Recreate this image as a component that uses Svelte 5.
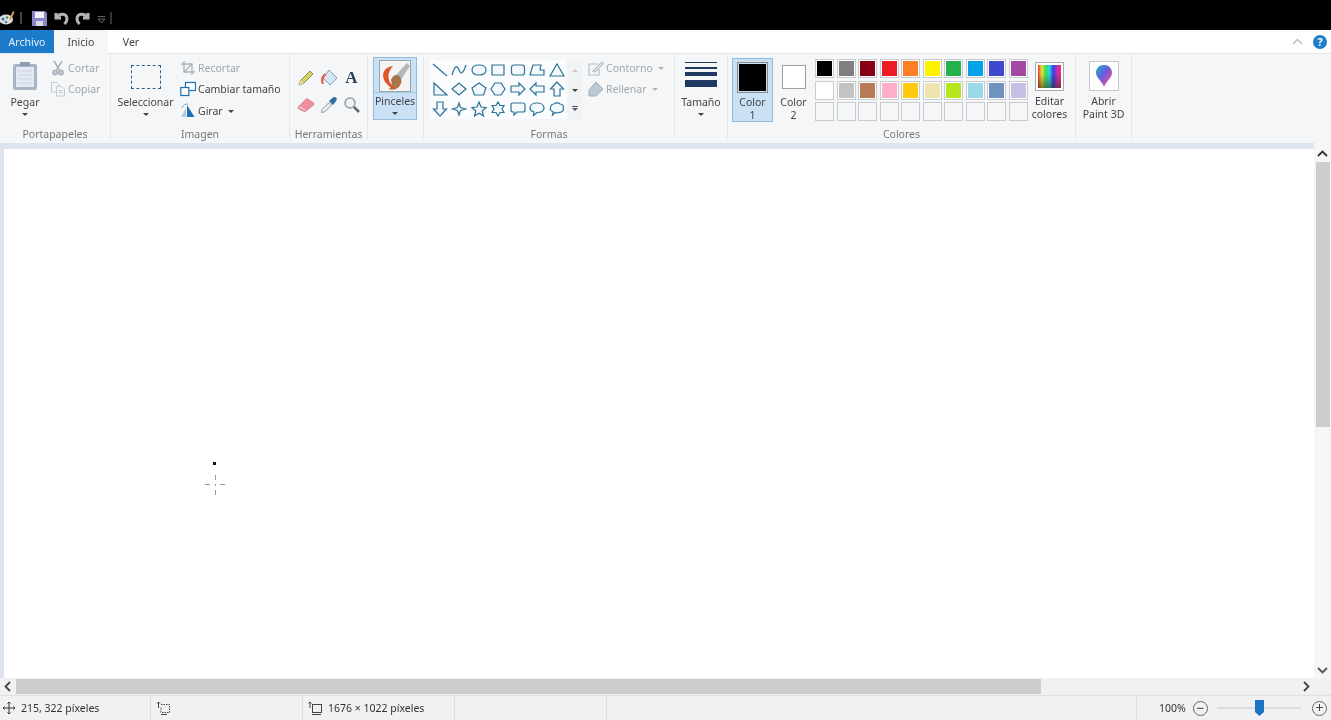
<script>
	const row1 = ['#000000', '#7f7f7f', '#880015', '#ed1c24', '#ff7f27', '#fff200', '#22b14c', '#00a2e8', '#3f48cc', '#a349a4'];
	const row2 = ['#ffffff', '#c3c3c3', '#b97a57', '#ffaec9', '#ffc90e', '#efe4b0', '#b5e61d', '#99d9ea', '#7092be', '#c8bfe7'];
	const row3 = Array(10).fill('#f5f6f7');
	const swatches = [...row1, ...row2, ...row3];

	// outlines for the shape gallery, on a 16x16 box
	const shapes = [
		'M1 2 L15 14',
		'M1 13 C4 3 6 3 8 8 C10 13 12 12 15 3',
		'M8 3 C12.5 3 15 5 15 8 C15 11 12.5 13 8 13 C3.5 13 1 11 1 8 C1 5 3.5 3 8 3Z',
		'M2 3 H14 V13 H2Z',
		'M4 3 H12 Q14.500 3 14.500 5.500 V10.500 Q14.500 13 12 13 H4 Q1.500 13 1.500 10.500 V5.500 Q1.500 3 4 3Z',
		'M4 3 H12 L11 8 H15 V13 H1Z',
		'M8 2 L15 14 H1Z',
		'M2 2 L15 14 H2Z',
		'M8 2 L15 8 L8 14 L1 8Z',
		'M8 2 L15 7 L12.500 14 H3.500 L1 7Z',
		'M5 2 H11 L15 8 L11 14 H5 L1 8Z',
		'M1 5 H9 V2 L15 8 L9 14 V11 H1Z',
		'M15 5 H7 V2 L1 8 L7 14 V11 H15Z',
		'M8 1 L14.500 8 H11 V15 H5 V8 H1.500Z',
		'M5 1 H11 V8 H14.500 L8 15 L1.500 8 H5Z',
		'M8 2 L9.500 6.500 L15 8 L9.500 9.500 L8 14 L6.500 9.500 L1 8 L6.500 6.500Z',
		'M8 1 L10 6 L15 6.500 L11.200 10 L12.500 15 L8 12.300 L3.500 15 L4.800 10 L1 6.500 L6 6Z',
		'M8 1 L10 4.500 L14 4.500 L12 8 L14 11.500 L10 11.500 L8 15 L6 11.500 L2 11.500 L4 8 L2 4.500 L6 4.500Z',
		'M3 2 H13 Q15 2 15 4 V9 Q15 11 13 11 H7 L4 14 V11 H3 Q1 11 1 9 V4 Q1 2 3 2Z',
		'M8 2 C12 2 15 4 15 7 C15 10 12 11.500 8 11.500 L4.500 14.500 L5 11 C2.500 10.300 1 8.800 1 7 C1 4 4 2 8 2Z',
		'M5 3 C6 1.500 10 1.500 11 3 C13.500 3 15 5 14.300 7 C15 9.500 13 11.500 10.500 11.300 C9 12 7 12 6 11.500 L3.500 14 L4 10.800 C1.500 10 .5 8 1.700 6 C1.500 4.300 3 3 5 3Z'
	];
</script>

<div class="app">
	<header class="titlebar">
		<svg class="logo" width="16" height="16" viewBox="0 0 16 16">
			<ellipse cx="7" cy="9.500" rx="7" ry="5" fill="#d8dee4" />
			<circle cx="4" cy="9" r="1.500" fill="#2f6f9f" />
			<circle cx="8" cy="7.500" r="1.300" fill="#3c9a50" />
			<circle cx="7" cy="12" r="1.300" fill="#7a7a7a" />
			<path d="M10 9 L14 1 L15.500 2 L12 10Z" fill="#d8a050" />
		</svg>
		<span class="title-sep"></span>
		<svg class="save" width="15" height="15" viewBox="0 0 15 15">
			<path d="M0 0 H13 L15 2 V15 H0Z" fill="#8a86c8" />
			<rect x="3" y="1" width="9" height="6" fill="#f1f1f8" />
			<rect x="4" y="10" width="7" height="5" fill="#d8d8e8" />
		</svg>
		<svg width="15" height="14" viewBox="0 0 15 14" fill="none" stroke="#b5b5b5" stroke-width="3">
			<path d="M2 2 V7 H7" />
			<path d="M2.500 6.500 C6 1.500 13 2.500 13 8 C13 10 12 11.500 10.500 13" />
		</svg>
		<svg class="redo" width="15" height="14" viewBox="0 0 15 14" fill="none" stroke="#b5b5b5" stroke-width="3">
			<path d="M13 2 V7 H8" />
			<path d="M12.500 6.500 C9 1.500 2 2.500 2 8 C2 10 3 11.500 4.500 13" />
		</svg>
		<svg class="qat" width="9" height="9" viewBox="0 0 9 9" fill="none" stroke="#666" stroke-width="1">
			<path d="M1 1.500 H8 M1 4 L4.500 8 L8 4Z" />
		</svg>
		<span class="title-sep faint"></span>
	</header>

	<nav class="tabs">
		<button class="tab file">Archivo</button>
		<button class="tab active">Inicio</button>
		<button class="tab ver">Ver</button>
		<div class="tab-right">
			<svg width="11" height="7" viewBox="0 0 11 7" fill="none" stroke="#b8b8b8" stroke-width="1.300"><path d="M1 6 L5.500 1.500 L10 6" /></svg>
			<span class="help">?</span>
		</div>
	</nav>

	<section class="ribbon">
		<div class="group clip">
			<div class="group-body">
				<div class="large pegar">
					<svg width="26" height="30" viewBox="0 0 26 30">
						<rect x="1" y="3" width="24" height="26" rx="2" fill="#a9b5c6" />
						<rect x="4" y="6" width="18" height="20" fill="#e3e9f3" />
						<path d="M6 10 H20 M6 14 H20 M6 18 H20 M6 22 H20" stroke="#cbd5e4" />
						<rect x="8" y="1" width="10" height="4" fill="#8f9db2" />
					</svg>
					<span class="large-label">Pegar</span>
					<span class="caret"></span>
				</div>
				<div class="small-col">
					<div class="small disabled">
						<svg width="16" height="16" viewBox="0 0 16 16" fill="none" stroke="#a9b3bf" stroke-width="1.500">
							<path d="M4 1 L9.500 10 M12 1 L6.500 10" />
							<circle cx="5" cy="12.500" r="2.200" fill="#c6ccd4" />
							<circle cx="11" cy="12.500" r="2.200" fill="#c6ccd4" />
						</svg>
						<span>Cortar</span>
					</div>
					<div class="small disabled">
						<svg width="16" height="16" viewBox="0 0 16 16" fill="#f2f4f6" stroke="#c4cad2">
							<path d="M1.500 1.500 H7 L9 3.500 V11 H1.500Z" />
							<path d="M6.500 5.500 H12 L14.500 8 V15 H6.500Z" />
							<path d="M8.500 9.500 H12.500 M8.500 11.500 H12.500" />
						</svg>
						<span>Copiar</span>
					</div>
				</div>
			</div>
			<span class="group-label">Portapapeles</span>
		</div>

		<div class="group imagen">
			<div class="group-body">
				<div class="large seleccionar">
					<span class="marquee"></span>
					<span class="large-label">Seleccionar</span>
					<span class="caret"></span>
				</div>
				<div class="small-col">
					<div class="small disabled">
						<svg width="16" height="16" viewBox="0 0 16 16" fill="none" stroke="#aab3bd" stroke-width="1.300">
							<path d="M4 1 V12 H15 M1 4 H12 V15" />
							<path d="M4 12 L12 4" />
						</svg>
						<span>Recortar</span>
					</div>
					<div class="small">
						<svg width="16" height="16" viewBox="0 0 16 16" fill="#fff" stroke="#1c6fb5" stroke-width="1.200">
							<rect x="5.500" y="1.500" width="10" height="8" />
							<rect x=".8" y="6.500" width="8" height="8" />
						</svg>
						<span>Cambiar tamaño</span>
					</div>
					<div class="small">
						<svg width="16" height="16" viewBox="0 0 16 16">
							<path d="M7 2 L14.500 14 H7Z" fill="#1c6fb5" />
							<path d="M6 5 L1 14 H6Z" fill="#b8c8d8" />
							<path d="M2 5 C3 2 5 1 8 1" fill="none" stroke="#7fa8c8" />
						</svg>
						<span>Girar</span>
						<span class="caret inline"></span>
					</div>
				</div>
			</div>
			<span class="group-label">Imagen</span>
		</div>

		<div class="group tools">
			<div class="tool-grid">
				<svg width="18" height="18" viewBox="0 0 18 18">
					<path d="M2 16 L3.500 11.500 L13 2 L16 5 L6.500 14.500Z" fill="#d6d25f" stroke="#8d8f4e" />
					<path d="M2 16 L3.500 11.500 L6.500 14.500Z" fill="#f0d8b0" />
				</svg>
				<svg width="18" height="18" viewBox="0 0 18 18">
					<path d="M9 1 L17 9 L10 16 L3 9Z" fill="#d6e6f2" stroke="#7f9fb8" />
					<path d="M5 4 C1 7 0 11 2 15 L4 15 C3 11 3 9 6 6Z" fill="#e2604a" />
				</svg>
				<span class="text-tool">A</span>
				<svg width="18" height="18" viewBox="0 0 18 18">
					<path d="M1 11 L9 3 Q10 2.500 11 3 L16.500 7 Q17.500 8 16.500 9 L9 15 Q8 16 7 15.500 L2 13 Q.5 12 1 11Z" fill="#ee8f9b" stroke="#c66a78" stroke-width=".6" />
					<path d="M1.500 11.500 L8 15 L9 15 L7 12.500 L3 10Z" fill="#f6c0c8" />
				</svg>
				<svg width="18" height="18" viewBox="0 0 18 18">
					<path d="M1.500 16.500 L2 13.500 L9 6.500 L11.500 9 L4.500 16Z" fill="#e6edf3" stroke="#8a9aa8" />
					<path d="M9 5 L13 1.500 Q15 .5 16.500 2 Q17.500 3.500 16 5 L13 9Z" fill="#2c6f9f" />
				</svg>
				<svg width="18" height="18" viewBox="0 0 18 18" fill="none">
					<circle cx="7" cy="7" r="5" fill="#eef3f7" stroke="#93a0ab" stroke-width="1.500" />
					<path d="M11 11 L16 16" stroke="#5d6a74" stroke-width="2.500" />
				</svg>
			</div>
			<span class="group-label">Herramientas</span>
		</div>

		<div class="group brushes">
			<div class="brush-btn">
				<div class="brush-top">
					<svg width="32" height="32" viewBox="0 0 32 32">
						<rect x=".5" y=".5" width="31" height="31" fill="#f4f4f4" stroke="#9aa4ac" />
						<path d="M16 16 L28 3 L31 6 L21 21Z" fill="#b5b8ba" />
						<path d="M12 20 Q15 13 20 16 Q25 20 20 27 Q15 31 10 29 Q14 26 12 20Z" fill="#a9744a" />
						<path d="M14 6 C5 7 1 15 7 23 C10 27 14 29 18 29.500 C11 25 5 16 14 6Z" fill="#e0552a" />
					</svg>
				</div>
				<span class="large-label">Pinceles</span>
				<span class="caret"></span>
			</div>
		</div>

		<div class="group formas">
			<div class="group-body">
				<div class="gallery">
					{#each shapes as d}
						<svg width="16" height="16" viewBox="0 0 16 16" fill="#f2f8fc" stroke="#2f7396" stroke-width="1.200"><path {d} /></svg>
					{/each}
				</div>
				<div class="gallery-scroll">
					<span class="up"></span>
					<span class="caret"></span>
					<span class="more"></span>
				</div>
				<div class="small-col formas-col">
					<div class="small disabled">
						<svg width="16" height="16" viewBox="0 0 16 16" fill="none" stroke="#b4bcc6" stroke-width="1.200">
							<path d="M1 4 H10 M1 4 V15 H11 V9" />
							<path d="M5 11 L14 2 L15.500 3.500 L7 12Z" />
						</svg>
						<span>Contorno</span>
						<span class="caret inline pale"></span>
					</div>
					<div class="small disabled">
						<svg width="16" height="16" viewBox="0 0 16 16" fill="#bcc8d6" stroke="#a3aebb">
							<path d="M8 1 L15 8 L8 15 H1 V9Z" />
						</svg>
						<span>Rellenar</span>
						<span class="caret inline pale"></span>
					</div>
				</div>
			</div>
			<span class="group-label">Formas</span>
		</div>

		<div class="group tamano">
			<div class="large">
				<div class="lines">
					<i style="height: 1px"></i>
					<i style="height: 2px"></i>
					<i style="height: 4px"></i>
					<i style="height: 7px"></i>
				</div>
				<span class="large-label">Tamaño</span>
				<span class="caret"></span>
			</div>
		</div>

		<div class="group colores">
			<div class="group-body">
				<div class="color-btn selected">
					<span class="chip big"><i style="background: #000"></i></span>
					<span class="color-label">Color<br />1</span>
				</div>
				<div class="color-btn">
					<span class="chip"><i style="background: #fff"></i></span>
					<span class="color-label">Color<br />2</span>
				</div>
				<div class="palette">
					{#each swatches as c}
						<span class="swatch"><i style="background: {c}"></i></span>
					{/each}
				</div>
				<div class="editar">
					<span class="rainbow"><i></i></span>
					<span class="color-label">Editar<br />colores</span>
				</div>
			</div>
			<span class="group-label">Colores</span>
		</div>

		<div class="group paint3d">
			<div class="p3d-icon">
				<svg width="18" height="24" viewBox="0 0 18 24">
					<defs>
						<linearGradient id="drop" x1="0" y1="0" x2="1" y2="1">
							<stop offset="0" stop-color="#18b0c8" />
							<stop offset=".45" stop-color="#6a5ce0" />
							<stop offset=".8" stop-color="#d850a0" />
							<stop offset="1" stop-color="#f08030" />
						</linearGradient>
					</defs>
					<path d="M9 1 C14 1 17 4.500 17 9 C17 14 12 16 9 23 C8 18 1 14 1 9 C1 4.500 4 1 9 1Z" fill="url(#drop)" />
				</svg>
			</div>
			<span class="color-label">Abrir<br />Paint 3D</span>
		</div>
	</section>

	<main class="main">
		<div class="workspace">
			<div class="canvas">
				<span class="dot"></span>
				<span class="cross"></span>
			</div>
		</div>
		<div class="vscroll">
			<svg width="11" height="7" viewBox="0 0 11 7" fill="none" stroke="#333" stroke-width="1.800"><path d="M1 6 L5.500 1.500 L10 6" /></svg>
			<div class="vtrack"><span class="vthumb"></span></div>
			<svg width="11" height="7" viewBox="0 0 11 7" fill="none" stroke="#555" stroke-width="1.800"><path d="M1 1 L5.500 5.500 L10 1" /></svg>
		</div>
	</main>

	<div class="hscroll">
		<svg width="7" height="11" viewBox="0 0 7 11" fill="none" stroke="#444" stroke-width="1.800"><path d="M6 1 L1.500 5.500 L6 10" /></svg>
		<div class="htrack"><span class="hthumb"></span></div>
		<svg width="7" height="11" viewBox="0 0 7 11" fill="none" stroke="#444" stroke-width="1.800"><path d="M1 1 L5.500 5.500 L1 10" /></svg>
		<span class="corner"></span>
	</div>

	<footer class="status">
		<div class="cell pos">
			<svg width="12" height="12" viewBox="0 0 12 12" fill="none" stroke="#333"><path d="M6 0 V12 M0 6 H12 M4.500 1.500 L6 0 L7.500 1.500 M4.500 10.500 L6 12 L7.500 10.500 M1.500 4.500 L0 6 L1.500 7.500 M10.500 4.500 L12 6 L10.500 7.500" /></svg>
			<span>215, 322 píxeles</span>
		</div>
		<div class="cell sel">
			<svg width="14" height="13" viewBox="0 0 14 13" fill="none" stroke="#444"><path d="M2.500 0 V6 M1 1.500 L2.500 0 L4 1.500" /><path d="M5 2.500 H13.500 V10.500 H5 V5" stroke-dasharray="1.500 1" /><path d="M5 12.500 H11" /></svg>
		</div>
		<div class="cell dim">
			<svg width="14" height="13" viewBox="0 0 14 13" fill="none" stroke="#444"><path d="M2 0 V6 M.5 1.500 L2 0 L3.500 1.500" /><rect x="4.500" y="2.500" width="9" height="8" /><path d="M4 12.500 H13" /></svg>
			<span>1676 × 1022 píxeles</span>
		</div>
		<div class="cell blank"></div>
		<div class="cell grow"></div>
		<div class="cell zoom">
			<span class="pct">100%</span>
			<span class="round">−</span>
			<div class="slider"><span class="knob"></span></div>
			<span class="round">+</span>
		</div>
	</footer>
</div>

<style>
	:global(body) {
		margin: 0;
		overflow: hidden;
	}

	.app {
		width: 1331px;
		height: 720px;
		display: flex;
		flex-direction: column;
		font-family: 'Noto Sans', 'Open Sans', sans-serif;
		font-size: 10.500px;
		color: #444;
		background: #fff;
		/* the reference is a soft video frame */
		filter: blur(0.35px);
	}

	.titlebar {
		height: 30px;
		flex: none;
		background: #000;
		display: flex;
		align-items: center;
		gap: 7px;
		padding-top: 6px;
		box-sizing: border-box;
	}

	.logo {
		margin-left: -1px;
		margin-right: -2px;
	}

	.title-sep {
		width: 2px;
		height: 12px;
		background: #444;
		margin-right: 3px;
	}

	.title-sep.faint {
		background: #333;
		margin-left: -3px;
	}

	.redo {
		margin-left: -1px;
	}

	.qat {
		margin-top: 3px;
	}

	.tabs {
		height: 23px;
		flex: none;
		display: flex;
		background: #fff;
		border-bottom: 1px solid #e4e6e9;
		box-sizing: content-box;
		margin-bottom: -1px;
		position: relative;
	}

	.tab {
		font: inherit;
		color: #444;
		border: none;
		background: none;
		padding: 0;
		width: 54px;
		height: 24px;
	}

	.tab.ver {
		width: 46px;
	}

	.tab.file {
		background: #1b7ac9;
		color: #e6f0fa;
		height: 23px;
	}

	.tab.active {
		background: #f5f6f7;
		height: 24px;
	}

	.tab-right {
		margin-left: auto;
		display: flex;
		align-items: center;
		gap: 10px;
		padding-right: 4px;
		height: 23px;
	}

	.help {
		width: 14px;
		height: 14px;
		border-radius: 50%;
		background: #1f7fc9;
		color: #fff;
		font-weight: 700;
		font-size: 11px;
		line-height: 14px;
		text-align: center;
	}

	.ribbon {
		height: 90px;
		flex: none;
		display: flex;
		background: #f5f6f7;
		box-sizing: border-box;
		padding-top: 1px;
	}

	.group {
		display: flex;
		flex-direction: column;
		border-right: 1px solid #e6e8ea;
		box-sizing: border-box;
		height: 85px;
		position: relative;
		flex: none;
	}

	.group-body {
		display: flex;
		flex: 1;
		min-height: 0;
	}

	.group-label {
		position: absolute;
		left: 0;
		right: 0;
		top: 73px;
		text-align: center;
		font-size: 10.500px;
		color: #777;
	}

	.clip { width: 111px; }
	.imagen { width: 179px; }
	.tools { width: 78px; }
	.brushes { width: 56px; }
	.formas { width: 251px; }
	.tamano { width: 53px; }
	.colores { width: 348px; }
	.paint3d { width: 56px; align-items: center; }

	.large {
		display: flex;
		flex-direction: column;
		align-items: center;
		padding-top: 7px;
		flex: none;
	}

	.large-label {
		line-height: 14px;
		white-space: nowrap;
	}

	.caret {
		width: 0;
		height: 0;
		border-left: 3px solid transparent;
		border-right: 3px solid transparent;
		border-top: 3px solid #444;
		margin-top: 4px;
	}

	.caret.inline {
		margin: 1px 0 0 3px;
	}

	.caret.pale {
		border-top-color: #b5b5b5;
	}

	.pegar {
		width: 50px;
	}

	.pegar svg {
		margin-bottom: 4px;
	}

	.small-col {
		display: flex;
		flex-direction: column;
		padding-top: 3px;
	}

	.small {
		height: 21.500px;
		display: flex;
		align-items: center;
		gap: 2px;
		white-space: nowrap;
	}

	.small.disabled {
		color: #a2a7ac;
	}

	.seleccionar {
		width: 69px;
	}

	.marquee {
		width: 28px;
		height: 22px;
		margin: 4px 0 6px;
		border: 1px dashed #2a5f8f;
	}

	.tool-grid {
		display: grid;
		grid-template-columns: repeat(3, 23px);
		grid-auto-rows: 27px;
		place-items: center;
		justify-content: center;
		padding-top: 10px;
	}

	.text-tool {
		font-family: 'Liberation Serif', serif;
		font-weight: 700;
		font-size: 17px;
		line-height: 18px;
		color: #2a4058;
	}

	.brush-btn {
		width: 44px;
		height: 63px;
		margin: 3px 0 0 5px;
		box-sizing: border-box;
		border: 1px solid #92bbdd;
		background: #c9e0f5;
		display: flex;
		flex-direction: column;
		align-items: center;
	}

	.brush-top {
		align-self: stretch;
		height: 35px;
		display: flex;
		justify-content: center;
		padding-top: 2px;
		box-sizing: border-box;
		border-bottom: 1px solid #a5c8e4;
		margin-bottom: 1px;
	}

	.formas .group-body {
		padding: 6px 0 0 6px;
	}

	.gallery {
		width: 136px;
		height: 59px;
		background: #fbfcfd;
		display: grid;
		grid-template-columns: repeat(7, 19.500px);
		grid-auto-rows: 19.500px;
		place-items: center;
	}

	.gallery-scroll {
		width: 14px;
		height: 59px;
		margin-left: 2px;
		display: flex;
		flex-direction: column;
		align-items: center;
		background: #f1f2f3;
	}

	.gallery-scroll .up {
		width: 0;
		height: 0;
		margin-top: 9px;
		border-left: 3px solid transparent;
		border-right: 3px solid transparent;
		border-bottom: 3px solid #c8c8c8;
	}

	.gallery-scroll .caret {
		margin-top: 17px;
	}

	.gallery-scroll .more {
		width: 6px;
		height: 1px;
		margin-top: 14px;
		background: #555;
		position: relative;
	}

	.gallery-scroll .more::after {
		content: '';
		position: absolute;
		left: 0;
		top: 2px;
		width: 0;
		height: 0;
		border-left: 3px solid transparent;
		border-right: 3px solid transparent;
		border-top: 3px solid #555;
	}

	.formas-col {
		margin: -6px 0 0 6px;
	}

	.tamano .large {
		padding-top: 8px;
	}

	.lines {
		width: 32px;
		height: 29px;
		display: flex;
		flex-direction: column;
		gap: 3.500px;
		margin-bottom: 4px;
	}

	.lines i {
		display: block;
		flex: none;
		background: #1f3a62;
	}

	.colores .group-body {
		padding: 4px 0 0 4px;
		box-sizing: border-box;
	}

	.color-btn {
		width: 41px;
		height: 64px;
		box-sizing: border-box;
		display: flex;
		flex-direction: column;
		align-items: center;
		border: 1px solid transparent;
	}

	.color-btn.selected {
		background: #c9e0f5;
		border-color: #92bbdd;
	}

	.color-label {
		line-height: 12.500px;
		text-align: center;
		white-space: nowrap;
	}

	.chip {
		width: 24px;
		height: 24px;
		box-sizing: border-box;
		border: 1px solid #a0a0a0;
		margin: 6px 0 7px;
		display: block;
	}

	.chip.big {
		width: 31px;
		height: 31px;
		padding: 1px;
		margin: 3px 0 3px;
		border: 1px solid #8a8a8a;
	}

	.chip i, .swatch i, .rainbow i {
		display: block;
		width: 100%;
		height: 100%;
	}

	.palette {
		display: grid;
		grid-template-columns: repeat(10, 19px);
		grid-auto-rows: 19px;
		gap: 2.500px;
		margin-left: 1px;
		margin-top: 1px;
		height: 62px;
	}

	.swatch {
		box-sizing: border-box;
		border: 1px solid #c9cccf;
		padding: 1px;
		background: #fff;
	}

	.swatch:nth-child(n + 21) {
		padding: 0;
		background: #f5f6f7;
	}

	.editar {
		width: 42px;
		display: flex;
		flex-direction: column;
		align-items: center;
		margin-left: 1px;
	}

	.rainbow {
		width: 29px;
		height: 29px;
		box-sizing: border-box;
		border: 1px solid #a8adb2;
		padding: 2px;
		background: #fff;
		margin: 4px 0 4px;
	}

	.rainbow i {
		background: linear-gradient(180deg, transparent 40%, rgba(50, 40, 20, 0.55)), linear-gradient(90deg, #f03030, #f0e030, #30e060, #30d0e0, #3040e0, #c030c0, #f03060);
	}

	.p3d-icon {
		width: 30px;
		height: 30px;
		box-sizing: border-box;
		border: 1px solid #c5c9cd;
		background: #fff;
		display: flex;
		align-items: center;
		justify-content: center;
		margin: 7px 0 4px;
	}

	.main {
		height: 535px;
		flex: none;
		display: flex;
	}

	.workspace {
		flex: 1;
		box-sizing: border-box;
		padding: 6px 0 0 4px;
		background: #dde4f0;
	}

	.canvas {
		height: 100%;
		background: #fff;
		position: relative;
	}

	.dot {
		position: absolute;
		left: 209px;
		top: 313px;
		width: 3px;
		height: 3px;
		background: #111;
	}

	.cross {
		position: absolute;
		left: 201px;
		top: 326px;
		width: 20px;
		height: 20px;
		background:
			linear-gradient(90deg, #999 0 25%, transparent 25% 75%, #999 75%) 0 9px / 20px 1px no-repeat,
			linear-gradient(#999 0 25%, transparent 25% 45%, #999 45% 55%, transparent 55% 75%, #999 75%) 9.500px 0 / 1px 20px no-repeat;
	}

	.vscroll {
		width: 17px;
		display: flex;
		flex-direction: column;
		align-items: center;
		background: #f6f6f6;
		padding: 7px 0 4px;
		box-sizing: border-box;
	}

	.vtrack {
		flex: 1;
		align-self: stretch;
		padding: 5px 1px 0 2px;
	}

	.vthumb {
		display: block;
		height: 265px;
		background: #cdcdcd;
	}

	.hscroll {
		height: 17px;
		flex: none;
		display: flex;
		align-items: center;
		background: #f1f1f1;
		padding-left: 4px;
	}

	.htrack {
		width: 1292px;
		align-self: stretch;
		padding: 1px 0 1px 5px;
		box-sizing: border-box;
	}

	.hthumb {
		display: block;
		width: 1025px;
		height: 100%;
		background: #cdcdcd;
	}

	.corner {
		width: 17px;
		margin-left: auto;
	}

	.status {
		height: 25px;
		flex: none;
		display: flex;
		background: #f0f1f2;
		border-top: 1px solid #dfe0e2;
		box-sizing: border-box;
		font-size: 10.500px;
		color: #333;
	}

	.cell {
		display: flex;
		align-items: center;
		box-sizing: border-box;
		border-right: 1px solid #dcdddf;
		flex: none;
		gap: 6px;
	}

	.pos { width: 151px; padding-left: 3px; }
	.sel { width: 152px; padding-left: 5px; }
	.dim { width: 152px; padding-left: 5px; }
	.blank { width: 152px; }
	.grow { flex: 1; }

	.zoom {
		width: 194px;
		border-right: none;
		padding-left: 22px;
		gap: 0;
	}

	.round {
		width: 15px;
		height: 15px;
		box-sizing: border-box;
		border: 1px solid #666;
		border-radius: 50%;
		font-size: 14px;
		line-height: 12px;
		text-align: center;
		color: #444;
	}

	.pct {
		width: 34px;
	}

	.slider {
		width: 84px;
		height: 2px;
		margin: 0 11px 0 9px;
		background: #dcdddf;
		position: relative;
	}

	.knob {
		position: absolute;
		left: 38px;
		top: -7px;
		width: 9px;
		height: 16px;
		background: #1a74c4;
		clip-path: polygon(0 0, 100% 0, 100% 75%, 50% 100%, 0 75%);
	}
</style>
